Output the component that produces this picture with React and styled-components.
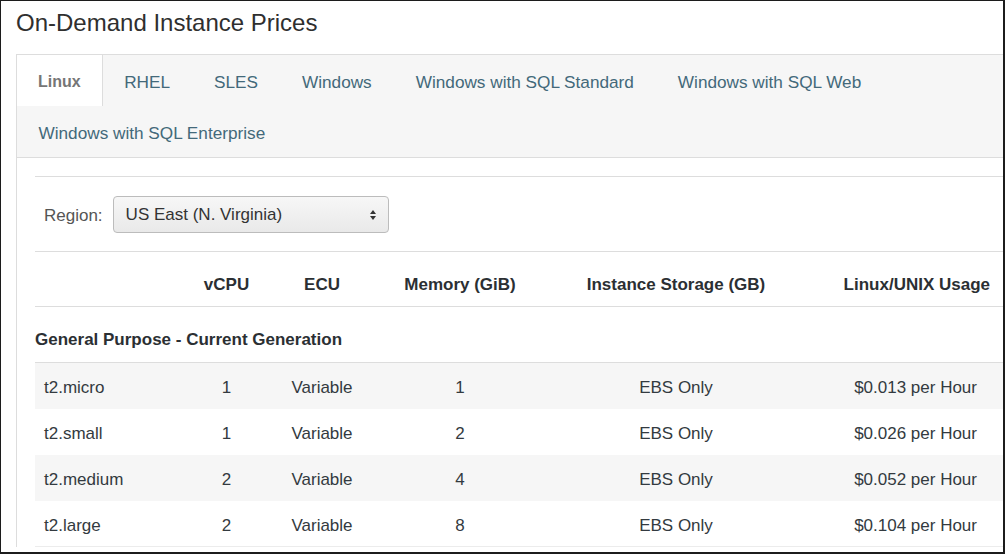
import styled, { createGlobalStyle } from 'styled-components';

const GlobalStyle = createGlobalStyle`
    html, body {
        margin: 0;
        padding: 0;
        background: #ffffff;
    }
    body {
        font-family: "Liberation Sans", Arial, sans-serif;
        color: #333333;
    }
`

const Frame = styled.div`
    width: 1005px;
    height: 554px;
    box-sizing: border-box;
    border: 1px solid #1c1c1c;
    border-right-width: 2px;
    border-bottom-width: 2px;
    overflow: hidden;
    background: #ffffff;
    padding-left: 15px;
`

const Title = styled.h1`
    margin: 0;
    padding: 7px 0 16px 0;
    height: 30px;
    line-height: 30px;
    font-size: 24px;
    font-weight: normal;
    color: #2f2f2f;
`

const Panel = styled.div`
    border-left: 1px solid #dddddd;
    border-top: 1px solid #dddddd;
`

const TabBar = styled.div`
    display: flex;
    flex-wrap: wrap;
    background: #f6f6f6;
    border-bottom: 1px solid #dddddd;
`

const Tab = styled.div`
    height: 48px;
    padding: 3px 21.5px 0 21.5px;
    display: flex;
    align-items: center;
    font-size: 17.2px;
    white-space: nowrap;
    color: ${p => p.$active ? '#767676' : '#43697a'};
    font-weight: ${p => p.$active ? 'bold' : 'normal'};
    background: ${p => p.$active ? '#ffffff' : 'transparent'};
    border-right: 1px solid ${p => p.$active ? '#dddddd' : 'transparent'};
    ${p => p.$active && 'font-size: 16px; padding: 3px 21px 0 21px;'}
`

const Content = styled.div`
    padding: 18px 0 0 18px;
`

const RegionRow = styled.div`
    display: flex;
    align-items: center;
    height: 74px;
    padding-left: 9px;
    gap: 10px;
    border-top: 1px solid #dddddd;
    border-bottom: 1px solid #dddddd;
`

const Label = styled.span`
    font-size: 17px;
    color: #555555;
    padding-top: 3px;
`

const Select = styled.div`
    width: 276px;
    height: 37px;
    box-sizing: border-box;
    border: 1px solid #bcbcbc;
    border-radius: 4px;
    background: linear-gradient(#f7f7f7, #e9e9e9);
    display: flex;
    align-items: center;
    justify-content: space-between;
    padding: 2px 11px 0 12px;
    font-size: 17px;
    color: #333333;
`

const Table = styled.div`
    display: grid;
    grid-template-columns: 135px 113px 78px 198px 234px 210px;
`

const HeadCell = styled.div`
    height: 42px;
    padding-top: 12px;
    display: flex;
    align-items: center;
    justify-content: ${p => p.$align || 'center'};
    padding-right: ${p => p.$align === 'flex-end' ? '13px' : '0'};
    font-size: 17px;
    font-weight: bold;
    color: #2b2f33;
    border-bottom: 1px solid #dddddd;
`

const GroupCell = styled.div`
    grid-column: 1 / -1;
    height: 44px;
    padding-top: 11px;
    display: flex;
    align-items: center;
    font-size: 17px;
    font-weight: bold;
    color: #2b2f33;
    border-bottom: 1px solid #dddddd;
`

const Cell = styled.div`
    height: 42px;
    padding-top: 4px;
    display: flex;
    align-items: center;
    justify-content: ${p => p.$align || 'center'};
    padding-left: ${p => p.$align === 'flex-start' ? '9px' : '0'};
    padding-right: ${p => p.$align === 'flex-end' ? '26px' : '0'};
    font-size: 17px;
    color: #333a40;
    background: ${p => p.$striped ? '#f6f6f6' : '#ffffff'};
    ${p => p.$last && 'border-bottom: 1px solid #ececec; height: 41px;'}
`

const tabs = ['Linux', 'RHEL', 'SLES', 'Windows', 'Windows with SQL Standard', 'Windows with SQL Web', 'Windows with SQL Enterprise']

const rows = [
    ['t2.micro', '1', 'Variable', '1', 'EBS Only', '$0.013 per Hour'],
    ['t2.small', '1', 'Variable', '2', 'EBS Only', '$0.026 per Hour'],
    ['t2.medium', '2', 'Variable', '4', 'EBS Only', '$0.052 per Hour'],
    ['t2.large', '2', 'Variable', '8', 'EBS Only', '$0.104 per Hour'],
]

const Arrows = () => (
    <svg width="8" height="12" viewBox="0 0 8 12">
        <path d="M4 1 L7 5 L1 5 Z" fill="#333" />
        <path d="M4 11 L7 7 L1 7 Z" fill="#333" />
    </svg>
)

const App = () => {
    return (
        <Frame>
            <GlobalStyle />
            <Title>On-Demand Instance Prices</Title>
            <Panel>
                <TabBar>
                    {tabs.map((t, i) => (
                        <Tab key={t} $active={i === 0}>{t}</Tab>
                    ))}
                </TabBar>
                <Content>
                    <RegionRow>
                        <Label>Region:</Label>
                        <Select>
                            <span>US East (N. Virginia)</span>
                            <Arrows />
                        </Select>
                    </RegionRow>
                    <Table>
                        <HeadCell />
                        <HeadCell>vCPU</HeadCell>
                        <HeadCell>ECU</HeadCell>
                        <HeadCell>Memory (GiB)</HeadCell>
                        <HeadCell>Instance Storage (GB)</HeadCell>
                        <HeadCell $align="flex-end">Linux/UNIX Usage</HeadCell>
                        <GroupCell>General Purpose - Current Generation</GroupCell>
                        {rows.map((r, i) => r.map((v, j) => (
                            <Cell
                                key={i + '-' + j}
                                $striped={i % 2 === 0}
                                $last={i === rows.length - 1}
                                $align={j === 0 ? 'flex-start' : j === 5 ? 'flex-end' : 'center'}
                            >
                                {v}
                            </Cell>
                        )))}
                    </Table>
                </Content>
            </Panel>
        </Frame>
    )
}

export default App
